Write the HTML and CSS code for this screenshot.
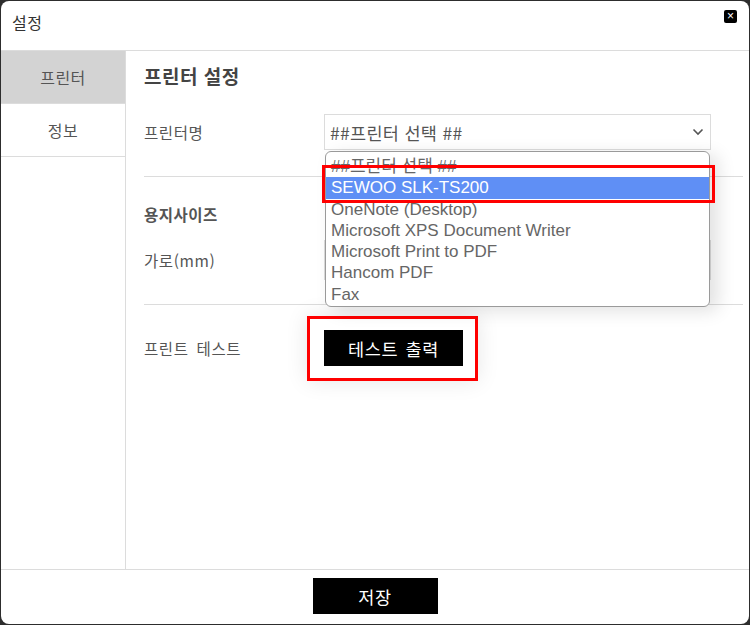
FILE: index.html
```html
<!DOCTYPE html>
<html lang="ko">
<head>
<meta charset="utf-8">
<title>설정</title>
<link rel="stylesheet" href="styles.css">
</head>
<body>
<div class="dialog">
  <div class="header">
    <span class="title">설정</span>
    <span class="close">×</span>
  </div>
  <div class="main">
    <div class="sidebar">
      <div class="side-item active">프린터</div>
      <div class="side-item">정보</div>
    </div>
    <div class="content">
      <div class="page-title">프린터 설정</div>
      <div class="row row-printer">
        <div class="label">프린터명</div>
        <div class="field">
          <div class="select">
            <span>##프린터 선택 ##</span>
            <svg class="chev" width="12" height="8" viewBox="0 0 12 8"><path d="M1.5 1.5 L6 6 L10.5 1.5" fill="none" stroke="#555" stroke-width="1.6"/></svg>
          </div>
          <div class="dropdown">
            <div class="opt">##프린터 선택 ##</div>
            <div class="opt sel">SEWOO SLK-TS200</div>
            <div class="opt">OneNote (Desktop)</div>
            <div class="opt">Microsoft XPS Document Writer</div>
            <div class="opt">Microsoft Print to PDF</div>
            <div class="opt">Hancom PDF</div>
            <div class="opt">Fax</div>
          </div>
          <div class="mark mark-select"></div>
        </div>
      </div>
      <div class="hr hr1"></div>
      <div class="section">용지사이즈</div>
      <div class="row row-width">
        <div class="label">가로(mm)</div>
        <div class="input"></div>
      </div>
      <div class="hr hr2"></div>
      <div class="row row-test">
        <div class="label">프린트 테스트</div>
        <div class="field">
          <button class="btn btn-test">테스트 출력</button>
          <div class="mark mark-btn"></div>
        </div>
      </div>
    </div>
  </div>
  <div class="footer">
    <button class="btn btn-save">저장</button>
  </div>
</div>
</body>
</html>
```
FILE: styles.css
```css
html, body {
  margin: 0;
  padding: 0;
  background: #2d2d2d;
}
body {
  width: 750px;
  height: 625px;
  overflow: hidden;
  font-family: "Noto Sans CJK KR", "Liberation Sans", sans-serif;
}
.dialog {
  margin: 1px;
  width: 748px;
  height: 623px;
  background: #fff;
  border-radius: 8px;
  display: flex;
  flex-direction: column;
  overflow: hidden;
}
.header {
  height: 49px;
  border-bottom: 1px solid #dcdcdc;
  display: flex;
  align-items: center;
  justify-content: space-between;
  padding: 0 12px 0 11px;
  flex: none;
}
.title {
  font-size: 16px;
  color: #333;
  margin-top: -8px;
  letter-spacing: 0.5px;
}
.close {
  width: 13px;
  height: 13px;
  background: #000;
  color: #fff;
  border-radius: 2px;
  font-family: "Liberation Sans", sans-serif;
  font-size: 12px;
  line-height: 12px;
  text-align: center;
  margin-top: -19px;
}
.main {
  flex: 1;
  display: flex;
  min-height: 0;
}
.sidebar {
  width: 124px;
  border-right: 1px solid #dcdcdc;
  flex: none;
}
.side-item {
  height: 52px;
  border-bottom: 1px solid #dcdcdc;
  display: flex;
  align-items: center;
  justify-content: center;
  font-size: 16px;
  letter-spacing: 0.5px;
  color: #555;
}
.side-item.active {
  background: #d3d3d3;
}
.content {
  flex: 1;
  padding: 12px 6px 0 18px;
  position: relative;
}
.page-title {
  height: 26px;
  line-height: 26px;
  font-size: 19px;
  font-weight: bold;
  letter-spacing: 0.5px;
  color: #444;
}
.row {
  display: flex;
  align-items: center;
}
.label {
  width: 180px;
  font-size: 15.5px;
  letter-spacing: 0.6px;
  word-spacing: 3px;
  color: #555;
  flex: none;
}
.row-printer {
  margin-top: 25px;
  height: 36px;
}
.field {
  position: relative;
}
.select {
  width: 371px;
  height: 34px;
  border: 1px solid #dcdcdc;
  display: flex;
  align-items: center;
  justify-content: space-between;
  padding: 0 8px 0 6px;
  box-sizing: content-box;
  font-size: 17.5px;
  letter-spacing: 0.3px;
  color: #555;
}
.select span {
  margin-left: -1px;
}
.chev {
  margin-right: -2px;
}
.dropdown {
  position: absolute;
  left: 1px;
  top: 37px;
  width: 383px;
  height: 150px;
  padding-top: 4px;
  background: #fff;
  border: 1px solid #9a9a9a;
  border-radius: 6px;
  box-shadow: 8px 4px 18px rgba(0, 0, 0, 0.12);
  overflow: hidden;
  z-index: 5;
}
.opt {
  height: 21.3px;
  line-height: 21px;
  padding-left: 5px;
  font-family: "Liberation Sans", "Noto Sans CJK KR", sans-serif;
  font-size: 17px;
  color: #666;
  white-space: nowrap;
}
.opt.sel {
  background: #5f8ff5;
  color: #fff;
}
.mark {
  position: absolute;
  border: 3px solid #ff0000;
  z-index: 10;
}
.mark-select {
  left: -2px;
  top: 51px;
  width: 387px;
  height: 32px;
}
.hr {
  height: 1px;
  background: #dcdcdc;
}
.hr1 {
  margin-top: 26px;
}
.section {
  margin-top: 27px;
  height: 20px;
  line-height: 20px;
  font-size: 15.5px;
  letter-spacing: 0.5px;
  font-weight: bold;
  color: #555;
}
.row-width {
  margin-top: 16px;
  height: 40px;
}
.input {
  width: 385px;
  height: 38px;
  border: 1px solid #dcdcdc;
}
.hr2 {
  margin-top: 24px;
}
.row-test {
  margin-top: 25px;
  height: 36px;
}
.btn {
  border: 0;
  background: #000;
  color: #fff;
  font-family: "Noto Sans CJK KR", sans-serif;
  font-size: 17.5px;
  letter-spacing: 0.6px;
  word-spacing: 2px;
  padding: 0;
  display: block;
}
.btn-test {
  width: 139px;
  height: 36px;
}
.mark-btn {
  left: -17px;
  top: -14px;
  width: 165px;
  height: 59px;
  box-shadow: 0 0 22px rgba(0, 0, 0, 0.1);
  z-index: 1;
}
.footer {
  flex: none;
  border-top: 1px solid #dcdcdc;
  display: flex;
  justify-content: center;
  align-items: flex-start;
  padding-top: 8px;
  box-sizing: border-box;
  height: 55px;
}
.btn-save {
  width: 125px;
  height: 36px;
}
```
